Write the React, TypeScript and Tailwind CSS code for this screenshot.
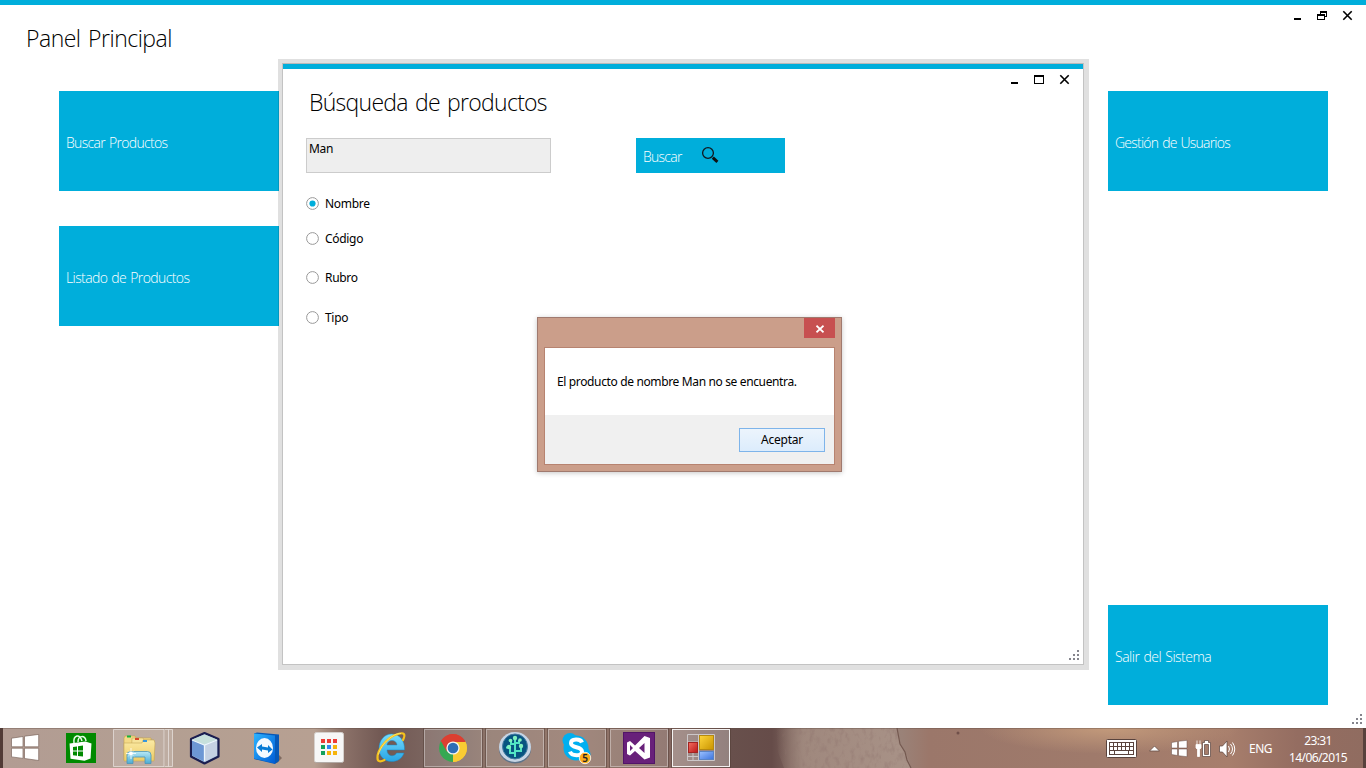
import React from "react";

const LIGHT = "font-['Open_Sans','Noto_Sans',sans-serif] font-light";

function Minimize() {
  return (
    <svg width="11" height="11" viewBox="0 0 11 11" shapeRendering="crispEdges">
      <rect x="2" y="8" width="7" height="2" fill="#000" />
    </svg>
  );
}

function Maximize() {
  return (
    <svg width="11" height="11" viewBox="0 0 11 11" shapeRendering="crispEdges">
      <path d="M0 1h10v9H0zM1 3v6h8V3z" fill="#000" fillRule="evenodd" />
    </svg>
  );
}

function Restore() {
  return (
    <svg width="11" height="11" viewBox="0 0 11 11" shapeRendering="crispEdges">
      <path d="M3 1h7v6H8V6h1V3H4v1H3zM0 4h8v6H0zM1 6v3h6V6z" fill="#000" fillRule="evenodd" />
    </svg>
  );
}

function Close() {
  return (
    <svg width="11" height="11" viewBox="0 0 11 11">
      <path d="M1.300 1.200L9.700 9.800M9.700 1.200L1.300 9.800" stroke="#000" strokeWidth="1.6" />
    </svg>
  );
}

function Grip() {
  return (
    <svg width="10" height="10" viewBox="0 0 10 10" fill="#84848c" shapeRendering="crispEdges">
      <path d="M8 0h2v2H8zM4 4h2v2H4zM8 4h2v2H8zM0 8h2v2H0zM4 8h2v2H4zM8 8h2v2H8z" />
    </svg>
  );
}

function Tile({ label, tracking }: { label: string; tracking: string }) {
  return (
    <button className={`flex h-[100px] w-[220px] items-center bg-[#00aedb] pl-[7px] pt-[2px] text-left text-[14px] text-white [word-spacing:1px] ${tracking} ${LIGHT}`}>
      {label}
    </button>
  );
}

function Radio({ label, checked }: { label: string; checked?: boolean }) {
  return (
    <label className="flex h-4 items-center gap-[6px] text-[12px] tracking-[-0.3px]">
      <svg width="13" height="13" viewBox="0 0 13 13" className="mb-[2px]">
        <circle cx="6.5" cy="6.5" r="5.9" fill="#fff" stroke="#999" />
        {checked && <circle cx="6.5" cy="6.5" r="3.1" fill="#00aedb" />}
      </svg>
      {label}
    </label>
  );
}

function SearchWindow() {
  return (
    <section className="absolute left-[278px] top-[59px] h-[611px] w-[811px] border-t-4 border-r-[5px] border-b-[5px] border-l-4 border-black/12">
      <div className="flex h-full flex-col border border-[#c3c3c3] border-t-[#b9b9b9] bg-white bg-clip-padding">
        <div className="h-[5px] shrink-0 bg-[#00aedb]" />
        <header className="flex h-[69px] shrink-0 justify-between pl-[26px] pr-[13px]">
          <h2 className={`pt-[15px] text-[23px] leading-9 tracking-[-0.72px] [word-spacing:2px] ${LIGHT}`}>Búsqueda de productos</h2>
          <div className="flex gap-[14px] pt-[5px]">
            <Minimize />
            <Maximize />
            <Close />
          </div>
        </header>
        <div className="flex pl-[23px]">
          <div className="h-[35px] w-[245px] border border-[#ccc] bg-[#eee] px-[2px] pt-[2px] text-[12px] leading-4 tracking-[-0.3px]">Man</div>
          <button className={`ml-[85px] flex h-[35px] w-[149px] items-center bg-[#00aedb] pl-[7px] text-[14px] tracking-[-0.75px] text-white ${LIGHT}`}>
            <span className="w-[58px] pt-px text-left">Buscar</span>
            <svg width="18" height="18" viewBox="0 0 18 18" className="mb-[2px]">
              <circle cx="7" cy="7" r="5.4" fill="none" stroke="#101820" strokeWidth="1.3" />
              <path d="M11.8 11.6l4.600 4.200" stroke="#101010" strokeWidth="3" />
            </svg>
          </button>
        </div>
        <div className="flex flex-col pl-[23px] pt-[23px]">
          <Radio label="Nombre" checked />
          <div className="h-[19px]" />
          <Radio label="Código" />
          <div className="h-[23px]" />
          <Radio label="Rubro" />
          <div className="h-[24px]" />
          <Radio label="Tipo" />
        </div>
        <div className="mt-auto flex justify-end pr-[4px] pb-[4px]">
          <Grip />
        </div>
      </div>
    </section>
  );
}

function MessageBox() {
  return (
    <section className="absolute left-[537px] top-[317px] flex h-[155px] w-[305px] flex-col border border-[#a07a6f] bg-[#cb9e8a] px-[6px] pb-[6px] shadow-[0_1px_5px_rgba(0,0,0,0.22)]">
      <div className="flex h-[29px] shrink-0 justify-end">
        <button className="flex h-5 w-[31px] items-center justify-center bg-[#c75050] pt-px">
          <svg width="8" height="8" viewBox="0 0 8 8">
            <path d="M.5.7L7.500 7.300M7.500.7L.5 7.300" stroke="#fff" strokeWidth="1.7" />
          </svg>
        </button>
      </div>
      <div className="flex grow flex-col border border-[#b78370] bg-white text-[12px]">
        <p className="h-[67px] pl-3 pt-[26px] leading-4 tracking-[-0.36px] whitespace-nowrap">El producto de nombre Man no se encuentra.</p>
        <div className="flex grow items-start justify-end bg-[#f0f0f0] pt-[13px] pr-[9px]">
          <button className="h-6 w-[86px] border border-[#7eb4ea] bg-linear-to-b from-[#ecf4fc] to-[#dcecfc] leading-5 tracking-[-0.25px]">Aceptar</button>
        </div>
      </div>
    </section>
  );
}

function Wallpaper() {
  return (
    <svg width="1366" height="40" viewBox="0 0 1366 40" className="absolute inset-0">
      <defs>
        <linearGradient id="wall">
          <stop offset="0" stopColor="#b29c93" />
          <stop offset=".12" stopColor="#b39f92" />
          <stop offset=".23" stopColor="#b7a092" />
          <stop offset=".25" stopColor="#8d736a" />
          <stop offset=".28" stopColor="#715853" />
          <stop offset=".33" stopColor="#806b65" />
          <stop offset=".36" stopColor="#8d7469" />
          <stop offset=".42" stopColor="#94786b" />
          <stop offset=".49" stopColor="#846760" />
          <stop offset=".535" stopColor="#68504c" />
          <stop offset=".565" stopColor="#664c49" />
          <stop offset=".59" stopColor="#8b736a" />
          <stop offset=".66" stopColor="#9a8278" />
          <stop offset=".68" stopColor="#9b776a" />
          <stop offset=".80" stopColor="#9f7a6b" />
          <stop offset=".90" stopColor="#a77e6c" />
          <stop offset=".95" stopColor="#946d61" />
          <stop offset="1" stopColor="#906c60" />
        </linearGradient>
        <linearGradient id="stone">
          <stop offset="0" stopColor="#a48d82" stopOpacity="0" />
          <stop offset=".2" stopColor="#a48d82" stopOpacity=".8" />
          <stop offset="1" stopColor="#a89287" />
        </linearGradient>
        <radialGradient id="glow">
          <stop offset="0" stopColor="#c39a7b" />
          <stop offset="1" stopColor="#c39a7b" stopOpacity="0" />
        </radialGradient>
        <filter id="grain" x="0" y="0" width="100%" height="100%">
          <feTurbulence type="fractalNoise" baseFrequency=".2 .12" numOctaves="3" seed="4" />
          <feColorMatrix values="0 0 0 0 .28  0 0 0 0 .18  0 0 0 0 .16  3 0 0 0 -1.45" />
          <feComposite in2="SourceGraphic" operator="in" />
        </filter>
      </defs>
      <rect width="1366" height="40" fill="url(#wall)" />
      <ellipse cx="1110" cy="0" rx="130" ry="26" fill="url(#glow)" />
      <path d="M776 0h121l3 16 7 12 4 12H784l-6-16z" fill="url(#stone)" />
      <path d="M782 0h115l3 16 7 12 4 12H790l-6-16z" filter="url(#grain)" opacity=".45" />
      <path d="M897 0l3 16 5 8 2 8 4 8" fill="none" stroke="#745950" strokeWidth="1.2" />
      <circle cx="958" cy="5" r="1.5" fill="#70504a" />
      <rect width="1366" height="1" fill="#5d4740" opacity=".35" />
      <rect width="3" height="40" fill="#513b36" />
      <rect x="1363" width="3" height="40" fill="#58423d" />
    </svg>
  );
}

function Slot({ frame, children }: { frame?: "open" | "active"; children: React.ReactNode }) {
  return (
    <svg width="62" height="40" viewBox="0 0 62 40" className="shrink-0">
      {frame && (
        <>
          <path d="M1.5 0v40M60.5 0v40" stroke="#4e3a34" strokeOpacity=".45" />
          <rect x="2.5" y="1.5" width="57" height="37" fill="#fff" fillOpacity={frame === "active" ? 0.28 : 0.13} stroke="#fff" strokeOpacity={frame === "active" ? 0.9 : 0.4} />
        </>
      )}
      {children}
    </svg>
  );
}

function Taskbar() {
  return (
    <footer className="relative h-10 w-full overflow-hidden">
      <Wallpaper />
      <div className="relative flex h-full">
        <svg width="50" height="40" viewBox="0 0 50 40" className="shrink-0">
          <path d="M11.5 10.2L23 8.500v10.300H11.500zM24.500 8.200L38.700 6.400v12.400H24.500zM11.500 20.200H23v10.200l-11.500-1.500zM24.500 20.200h14.200v12.300l-14.200-2z" fill="#fff" stroke="#7d675f" strokeWidth=".7" />
        </svg>
        <Slot>
          <rect x="16" y="5" width="30" height="30" fill="#008a00" />
          <path d="M24 15c-1-8 6-10 8-2M28 14c0-7 7-7 8-1" fill="none" stroke="#e8ffe8" strokeWidth="1.5" />
          <path d="M19.500 15.500l16-2 6 2-1 15-6 2.200-14-2z" fill="#fff" />
          <path d="M23 19l4-.6v4.200h-4zM28 18.200l5-.7v5.100h-5zM23 23.600h4v4.100l-4-.5zM28 23.600h5v5l-5-.7z" fill="#008a00" />
        </Slot>
        <svg width="62" height="40" viewBox="0 0 62 40" className="shrink-0">
          <defs>
            <linearGradient id="folder" x2="0" y2="1">
              <stop stopColor="#fbeaa5" />
              <stop offset="1" stopColor="#edcc65" />
            </linearGradient>
            <linearGradient id="stand" x2="0" y2="1">
              <stop stopColor="#b8e8f5" />
              <stop offset="1" stopColor="#4bacd4" />
            </linearGradient>
          </defs>
          <path d="M1.500 1.500h50.500v37H1.500zM52.500 1.500h4v37h-4M56.500 1.500h4v37h-4" fill="#fff" fillOpacity=".15" stroke="#fff" strokeOpacity=".5" />
          <path d="M13 8h10l1 2h15v22H12V10z" fill="#f4da87" stroke="#c3a14e" strokeWidth=".6" />
          <path d="M20 10h11l1 2h10v20H19z" fill="#f7e39a" stroke="#c8a857" strokeWidth=".6" />
          <path d="M12 15h18l1-3h11l1 3-1 18H12z" fill="url(#folder)" stroke="#c8a857" strokeWidth=".6" />
          <path d="M15 7.500h4v2h-4z" fill="#15b23d" />
          <path d="M23 10h4v2h-4z" fill="#d84628" />
          <path d="M31 12h4v2h-4z" fill="#3696dc" />
          <path d="M15 35.500V27q0-3.500 3.500-3.500h17Q39 23.500 39 27v8.500h-6V29H21v6.500z" fill="url(#stand)" stroke="#4a96b9" strokeWidth=".8" />
          <path d="M19 20v11M14 25.500h10" stroke="#fff" strokeWidth=".8" />
          <path d="M16 22.500l6 6M22 22.500l-6 6" stroke="#fff" strokeOpacity=".7" strokeWidth=".7" />
          <circle cx="19" cy="25.500" r="1.800" fill="#fff" />
        </svg>
        <Slot>
          <path d="M30.500 5L44.500 11v17.500L30.500 35.500 17 28.500V11z" fill="#a6bedb" stroke="#1b1e50" strokeWidth="2.200" strokeLinejoin="round" />
          <path d="M30.500 6.500l12.500 5-12.500 5-12.500-5z" fill="#c7e0dc" />
          <path d="M18 12l12 5v16.500l-12-6z" fill="#6d97d4" />
          <path d="M31 17l12-5v15.500l-12 6z" fill="#c5d1e3" />
          <path d="M18 12l12.500 5L43 12M30.500 17v16" stroke="#edf6fb" strokeWidth="1.300" fill="none" />
        </Slot>
        <Slot>
          <defs>
            <linearGradient id="tv" x2="1" y2="1">
              <stop stopColor="#2cb4ff" />
              <stop offset="1" stopColor="#005bd5" />
            </linearGradient>
          </defs>
          <path d="M18 31l23 4 5-5-4-4z" fill="#47332e" opacity=".5" />
          <path d="M18 5.500l3-1 22 2v26.500l-4 3-21-5z" fill="#0759b8" />
          <path d="M18 5.500L39 7.500v28L18 30.500z" fill="url(#tv)" />
          <ellipse cx="28.500" cy="20" rx="8.500" ry="10" fill="#f5faff" />
          <path d="M21 19.500l5-3.500v2.500l6 1v-2.500l4.500 4.500-4.500 3.500v-2.500l-6-1v2.500z" fill="#087bd5" />
        </Slot>
        <Slot>
          <rect x="16.500" y="4.500" width="29" height="30" rx="2" fill="#f7f7f7" stroke="#d5d0cc" />
          <path d="M17 34.500h28" stroke="#b2aaa6" />
          <path d="M23 11h4v4h-4zM29 11h4v4h-4zM35 11h4v4h-4z" fill="#ee3c36" />
          <path d="M23 17h4v4h-4zM23 23h4v4h-4z" fill="#13a15c" />
          <path d="M29 17h4v4h-4z" fill="#3488f5" />
          <path d="M35 17h4v4h-4zM29 23h4v4h-4zM35 23h4v4h-4z" fill="#f6b40b" />
        </Slot>
        <Slot>
          <defs>
            <linearGradient id="ie" x2="0" y2="1">
              <stop stopColor="#75dcff" />
              <stop offset="1" stopColor="#28a4e4" />
            </linearGradient>
          </defs>
          <path d="M44 25c-2 6-7 8.500-12.500 8.500C24 33.500 19 28 19 20.500S24 6 31.500 6C40 6 45 13 44.500 22H27c0 6.500 7.500 7.500 9.500 3zM27 17h10c-.5-6-9.500-6-10 0z" fill="url(#ie)" stroke="#168ac7" strokeWidth=".5" fillRule="evenodd" />
          <path d="M43 12c3-6 1-8-5-6C27 9 17 22 17.500 30c0 4 3 4 7 2" fill="none" stroke="#f5c21c" strokeWidth="2.200" strokeLinecap="round" />
          <path d="M41 5.500c-7-1-20 10-22.500 21" fill="none" stroke="#ffe873" strokeWidth=".8" />
        </Slot>
        <Slot frame="open">
          <path d="M31 20L18.900 13A14 14 0 0 1 43.100 13z" fill="#dc3f31" />
          <path d="M31 20L18.900 13A14 14 0 0 0 31 34z" fill="#36a852" />
          <path d="M31 20L43.100 13A14 14 0 0 1 31 34z" fill="#f9cc33" />
          <path d="M18.900 13A14 14 0 0 1 43.100 13l.7 1.500H31l-6.200 9z" fill="#dc3f31" />
          <path d="M43.600 14H31l6 9-6 11A14 14 0 0 0 43.600 14z" fill="#f9cc33" />
          <circle cx="31" cy="20" r="6.600" fill="#f4f4f0" />
          <circle cx="31" cy="20" r="5.300" fill="#2e6eb5" />
        </Slot>
        <Slot frame="open">
          <ellipse cx="31" cy="21" rx="16" ry="14.500" fill="#5e7389" />
          <ellipse cx="31" cy="19" rx="16" ry="15" fill="#c6d5e5" />
          <circle cx="31" cy="18.500" r="12.500" fill="#075481" stroke="#447ba1" />
          <path d="M31 29V10M31 25h-5v-6M31 23h6v-5M24.500 19.500H22M31 16h-4v-4M31 15h4v-3" stroke="#52e5c4" strokeWidth="2" fill="none" />
          <g fill="#81f1bf">
            <circle cx="31" cy="10" r="2.200" />
            <circle cx="25" cy="19" r="2.200" />
            <circle cx="37" cy="18" r="2.200" />
            <circle cx="26.500" cy="12.500" r="1.800" />
            <circle cx="36" cy="12" r="1.800" />
          </g>
        </Slot>
        <Slot frame="open">
          <circle cx="30" cy="20" r="12.500" fill="#00aff0" />
          <circle cx="24" cy="12.500" r="7.500" fill="#00aff0" />
          <circle cx="37" cy="26" r="7.500" fill="#00aff0" />
          <path d="M36 14.500c-1.500-4-11-4-11 .8 0 5.400 11 2.500 11 8.200 0 5.200-10.500 4.800-12 .2" stroke="#fff" strokeWidth="4" fill="none" />
          <circle cx="39" cy="30" r="5.700" fill="#ffad18" stroke="#fff" strokeWidth=".8" />
          <text x="39" y="33.600" textAnchor="middle" fontFamily="Noto Sans, sans-serif" fontSize="10" fontWeight="600" fill="#222">5</text>
        </Slot>
        <Slot frame="open">
          <rect x="15.500" y="4.500" width="31" height="31" fill="#68217a" stroke="#511568" />
          <path d="M36.500 8L42 10v19.500l-5.500 2L27 23l-5 4.500-3-1.500V14.500l3-1.500 5 4.500zM36.500 15l-5.500 5 5.500 5zM22 17v6l3-3z" fill="#fff" fillRule="evenodd" />
        </Slot>
        <Slot frame="active">
          <defs>
            <linearGradient id="yellow" x2="1" y2="1">
              <stop stopColor="#ffd63c" />
              <stop offset="1" stopColor="#c99400" />
            </linearGradient>
            <linearGradient id="blue" x2="1" y2="1">
              <stop stopColor="#9dc2ff" />
              <stop offset="1" stopColor="#3b73dd" />
            </linearGradient>
            <linearGradient id="red" x2="1" y2="1">
              <stop stopColor="#f36e60" />
              <stop offset="1" stopColor="#bb1717" />
            </linearGradient>
          </defs>
          <path d="M17.500 6.500h27v26h-27zM28.500 6.500v26M17.500 24.500h11M23 24.500v8M17.500 14h11M17.500 28.500h11" fill="none" stroke="#ccc7c8" />
          <rect x="29.500" y="7.500" width="14" height="14" fill="url(#yellow)" stroke="#b58911" />
          <rect x="18.500" y="14.500" width="9" height="10" fill="url(#red)" stroke="#a32321" />
          <rect x="29.500" y="23.500" width="14" height="8" fill="url(#blue)" stroke="#5a83c3" />
        </Slot>
        <div className="ml-auto flex h-full pr-[3px] text-[12px] text-white">
          <svg width="149" height="40" viewBox="1100 0 149 40" className="shrink-0">
            <rect x="1106.500" y="11.500" width="30" height="18" rx="1" fill="#fff" stroke="#59433d" />
            <path d="M1109 14h25v13h-25z" fill="#59433d" />
            <path d="M1110 15h3v3h-3zM1114 15h3v3h-3zM1118 15h3v3h-3zM1122 15h3v3h-3zM1126 15h3v3h-3zM1130 15h3v3h-3zM1110 19h3v3h-3zM1114 19h3v3h-3zM1118 19h3v3h-3zM1122 19h3v3h-3zM1126 19h3v3h-3zM1130 19h3v3h-3zM1110 23h4v3h-4zM1115 23h13v3h-13zM1129 23h4v3h-4z" fill="#fff" />
            <path d="M1149.500 23l5-5 5 5z" fill="#fff" stroke="#654b44" strokeWidth=".8" />
            <path d="M1171.500 14.500l6-1v6.500h-6zM1178.500 13.300l8.500-1v7.700h-8.500zM1171.500 21h6v6.500l-6-1zM1178.500 21h8.500v7.700l-8.500-1z" fill="#fff" stroke="#654b44" strokeWidth=".5" />
            <path d="M1202.500 14.500h2v-2h4v2h2v14h-8zM1204.500 16.500v10h4v-10z" fill="#fff" stroke="#59433d" strokeWidth=".7" fillRule="evenodd" />
            <path d="M1197 12.500v4M1200 12.500v4M1196 16.500h5v3.500l-1.500 1.500v7h-2v-7l-1.500-1.500z" fill="#fff" stroke="#fff" strokeWidth=".8" />
            <path d="M1219.500 18h3l4.500-5v16l-4.500-5h-3z" fill="#fff" stroke="#59433d" strokeWidth=".7" />
            <path d="M1228.500 18q2 3 0 6M1230.500 16q4 5 0 10M1232.500 14.500q4.500 6.500 0 13" fill="none" stroke="#fff" strokeWidth="1" />
          </svg>
          <span className="w-[24px] leading-[41px] tracking-[-0.5px]">ENG</span>
          <div className="ml-[15px] mr-[15px] flex w-[60px] flex-col items-center pt-[4px] leading-[17px] tracking-[-0.6px]">
            <span>23:31</span>
            <span>14/06/2015</span>
          </div>
        </div>
      </div>
    </footer>
  );
}

export default function App() {
  return (
    <div className="relative flex h-[768px] w-[1366px] flex-col overflow-hidden bg-white font-['Noto_Sans','Open_Sans',sans-serif] text-[12px] text-black">
      <div className="h-[5px] shrink-0 bg-[#00aedb]" />
      <header className="flex h-[86px] shrink-0 justify-between pl-[26px] pr-[13px]">
        <h1 className={`pt-[15px] text-[23px] leading-9 tracking-[-0.5px] [word-spacing:2px] ${LIGHT}`}>Panel Principal</h1>
        <div className="flex gap-[14px] pt-[5px]">
          <Minimize />
          <Restore />
          <Close />
        </div>
      </header>
      <main className="flex grow justify-between pl-[59px] pr-[38px]">
        <div className="flex flex-col gap-[35px]">
          <Tile label="Buscar Productos" tracking="tracking-[-0.68px]" />
          <Tile label="Listado de Productos" tracking="tracking-[-0.6px]" />
        </div>
        <div className="flex flex-col justify-between pb-[23px]">
          <Tile label="Gestión de Usuarios" tracking="tracking-[-0.77px]" />
          <Tile label="Salir del Sistema" tracking="tracking-[-0.5px]" />
        </div>
      </main>
      <div className="absolute right-[4px] bottom-[44px]">
        <Grip />
      </div>
      <Taskbar />
      <SearchWindow />
      <MessageBox />
    </div>
  );
}
